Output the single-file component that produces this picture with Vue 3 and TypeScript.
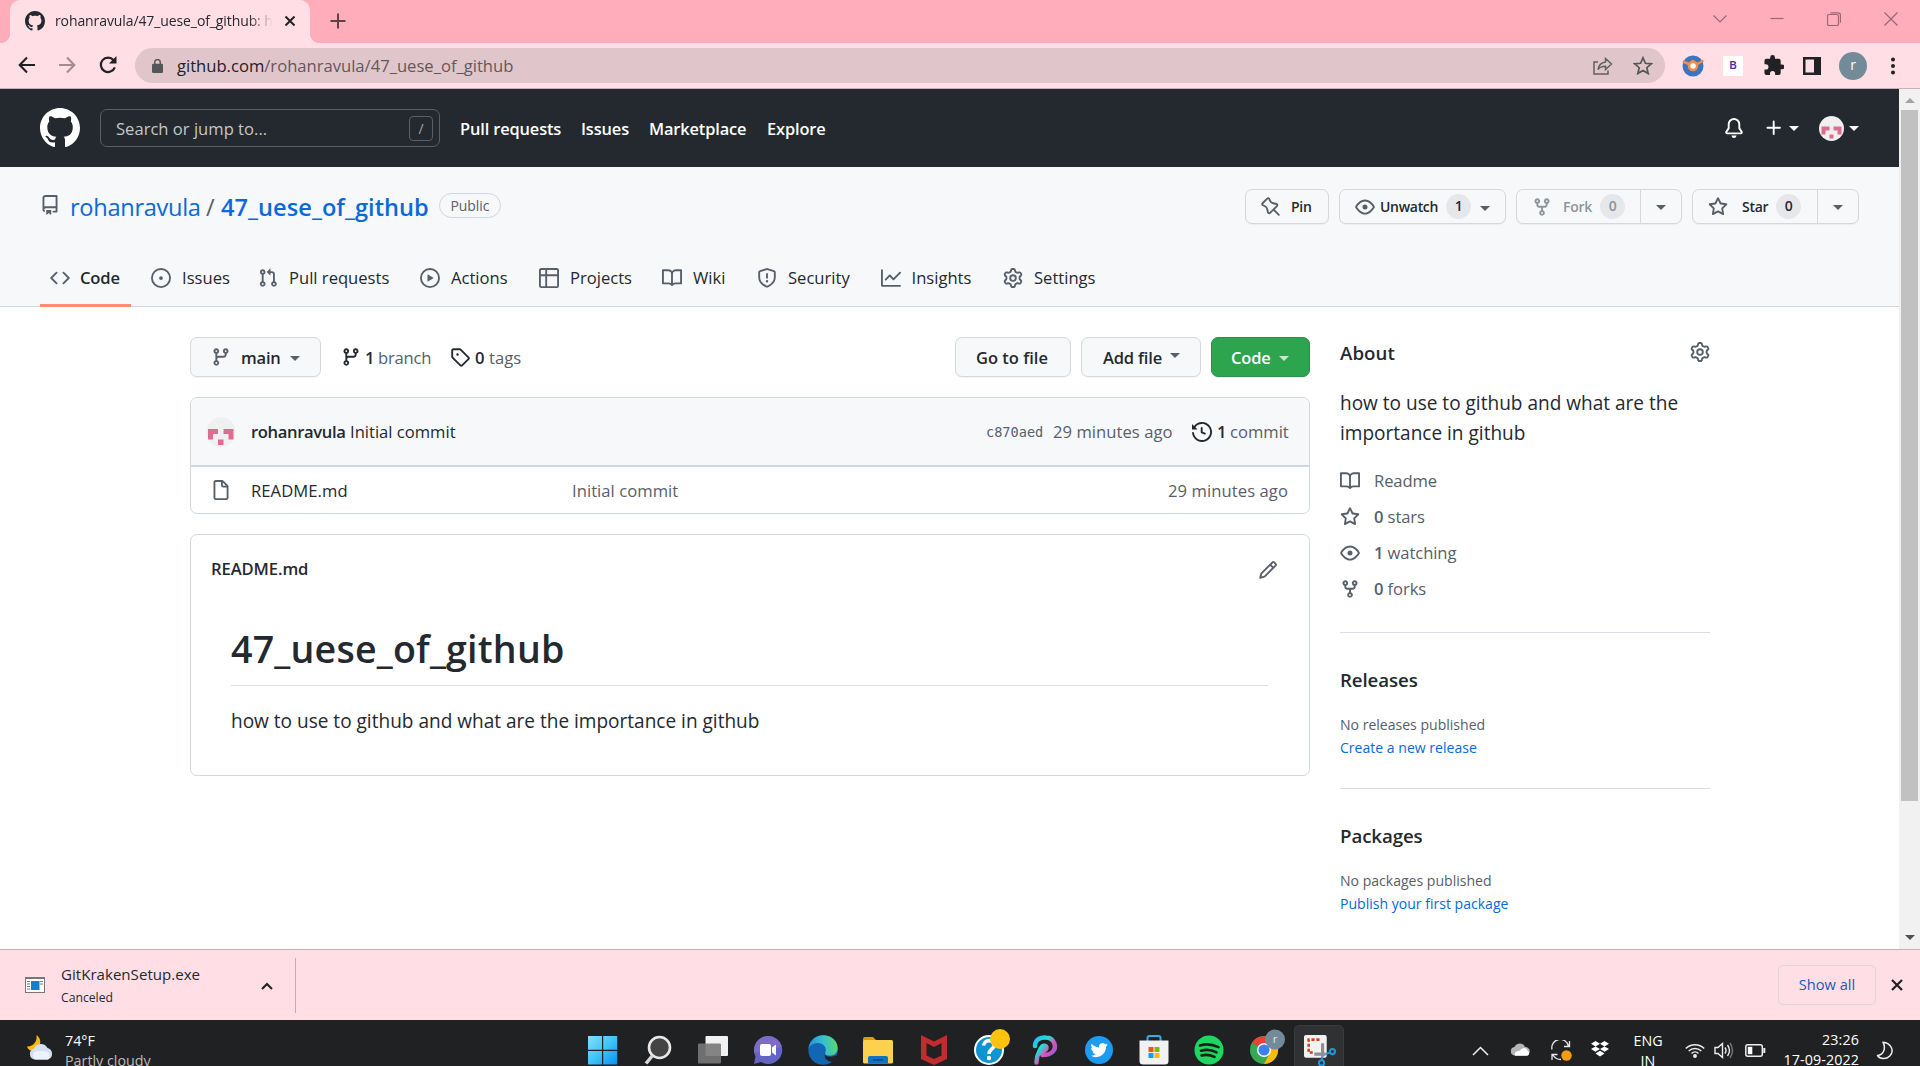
<script setup lang="ts">
import { h } from 'vue'

const paths: Record<string, string> = {
  mark: 'M8 0C3.58 0 0 3.58 0 8c0 3.54 2.29 6.53 5.47 7.59.4.07.55-.17.55-.38 0-.19-.01-.82-.01-1.49-2.01.37-2.53-.49-2.69-.94-.09-.23-.48-.94-.82-1.13-.28-.15-.68-.52-.01-.53.63-.01 1.08.58 1.23.82.72 1.21 1.87.87 2.33.66.07-.52.28-.87.51-1.07-1.78-.2-3.64-.89-3.64-3.95 0-.87.31-1.59.82-2.15-.08-.2-.36-1.02.08-2.12 0 0 .67-.21 2.2.82.64-.18 1.32-.27 2-.27.68 0 1.36.09 2 .27 1.53-1.04 2.2-.82 2.2-.82.44 1.1.16 1.92.08 2.12.51.56.82 1.27.82 2.15 0 3.07-1.87 3.75-3.65 3.95.29.25.54.73.54 1.48 0 1.07-.01 1.93-.01 2.2 0 .21.15.46.55.38A8.013 8.013 0 0016 8c0-4.42-3.58-8-8-8z',
  bell: 'M8 16a2 2 0 001.985-1.75c.017-.137-.097-.25-.235-.25h-3.5c-.138 0-.252.113-.235.25A2 2 0 008 16zM8 1.5A3.5 3.5 0 004.5 5v2.947c0 .346-.102.683-.294.97l-1.703 2.556a.018.018 0 00-.003.01l.001.006c0 .002.002.004.004.006a.017.017 0 00.006.004l.007.001h10.964l.007-.001a.016.016 0 00.006-.004.016.016 0 00.004-.006l.001-.007a.017.017 0 00-.003-.01l-1.703-2.554a1.75 1.75 0 01-.294-.97V5A3.5 3.5 0 008 1.5zM3 5a5 5 0 0110 0v2.947c0 .05.015.098.042.139l1.703 2.555A1.518 1.518 0 0113.482 13H2.518a1.518 1.518 0 01-1.263-2.36l1.703-2.554A.25.25 0 003 7.947V5z',
  plus: 'M7.75 2a.75.75 0 01.75.75V7h4.25a.75.75 0 110 1.5H8.5v4.25a.75.75 0 11-1.5 0V8.5H2.75a.75.75 0 010-1.5H7V2.75A.75.75 0 017.75 2z',
  repo: 'M2 2.5A2.5 2.5 0 014.5 0h8.75a.75.75 0 01.75.75v12.5a.75.75 0 01-.75.75h-2.5a.75.75 0 110-1.5h1.75v-2h-8a1 1 0 00-.714 1.7.75.75 0 01-1.072 1.05A2.495 2.495 0 012 11.5v-9zm10.5-1V9h-8c-.356 0-.694.074-1 .208V2.5a1 1 0 011-1h8zM5 12.25v3.25a.25.25 0 00.4.2l1.45-1.087a.25.25 0 01.3 0L8.6 15.7a.25.25 0 00.4-.2v-3.25a.25.25 0 00-.25-.25h-3.5a.25.25 0 00-.25.25z',
  code: 'M4.72 3.22a.75.75 0 011.06 1.06L2.06 8l3.72 3.72a.75.75 0 11-1.06 1.06L.47 8.53a.75.75 0 010-1.06l4.25-4.25zm6.56 0a.75.75 0 10-1.06 1.06L13.94 8l-3.72 3.72a.75.75 0 101.06 1.06l4.25-4.25a.75.75 0 000-1.06l-4.25-4.25z',
  issue: 'M8 9.5a1.5 1.5 0 100-3 1.5 1.5 0 000 3zM8 0a8 8 0 100 16A8 8 0 008 0zM1.5 8a6.5 6.5 0 1113 0 6.5 6.5 0 01-13 0z',
  pull: 'M7.177 3.073L9.573.677A.25.25 0 0110 .854v4.792a.25.25 0 01-.427.177L7.177 3.427a.25.25 0 010-.354zM3.75 2.5a.75.75 0 100 1.5.75.75 0 000-1.5zm-2.25.75a2.25 2.25 0 113 2.122v5.256a2.251 2.251 0 11-1.5 0V5.372A2.25 2.25 0 011.5 3.25zM11 2.5h-1V4h1a1 1 0 011 1v5.628a2.251 2.251 0 101.5 0V5A2.5 2.5 0 0011 2.5zm1 10.25a.75.75 0 111.5 0 .75.75 0 01-1.5 0zM3.75 12a.75.75 0 100 1.5.75.75 0 000-1.5z',
  play: 'M1.5 8a6.5 6.5 0 1113 0 6.5 6.5 0 01-13 0zM8 0a8 8 0 100 16A8 8 0 008 0zM6.379 5.227A.25.25 0 006 5.442v5.117a.25.25 0 00.379.214l4.264-2.559a.25.25 0 000-.428L6.379 5.227z',
  table: 'M0 1.75C0 .784.784 0 1.75 0h12.5C15.216 0 16 .784 16 1.75v12.5A1.75 1.75 0 0114.25 16H1.75A1.75 1.75 0 010 14.25V1.75zM1.5 6.5v7.75c0 .138.112.25.25.25H5v-8H1.5zM5 5H1.5V1.75a.25.25 0 01.25-.25H5V5zm1.5 1.5v8h7.75a.25.25 0 00.25-.25V6.5h-8zm8-1.5h-8V1.5h7.75a.25.25 0 01.25.25V5z',
  book: 'M0 1.75A.75.75 0 01.75 1h4.253c1.227 0 2.317.59 3 1.501A3.744 3.744 0 0111.006 1h4.245a.75.75 0 01.75.75v10.5a.75.75 0 01-.75.75h-4.507a2.25 2.25 0 00-1.591.659l-.622.621a.75.75 0 01-1.06 0l-.622-.621A2.25 2.25 0 005.258 13H.75a.75.75 0 01-.75-.75V1.75zm8.755 3a2.25 2.25 0 012.25-2.25H14.5v9h-3.757c-.71 0-1.4.201-1.992.572l.004-7.322zm-1.504 7.324l.004-5.073-.002-2.253A2.25 2.25 0 005.003 2.5H1.5v9h3.757a3.75 3.75 0 011.994.574z',
  shield: 'M7.467.133a1.75 1.75 0 011.066 0l5.25 1.68A1.75 1.75 0 0115 3.48V7c0 1.566-.32 3.182-1.303 4.682-.983 1.498-2.585 2.813-5.032 3.855a1.7 1.7 0 01-1.33 0c-2.447-1.042-4.049-2.357-5.032-3.855C1.32 10.182 1 8.566 1 7V3.48a1.75 1.75 0 011.217-1.667l5.25-1.68zm.61 1.429a.25.25 0 00-.153 0l-5.25 1.68a.25.25 0 00-.174.238V7c0 1.358.275 2.666 1.057 3.86.784 1.194 2.121 2.34 4.366 3.297a.2.2 0 00.154 0c2.245-.956 3.582-2.104 4.366-3.298C13.225 9.666 13.5 8.36 13.5 7V3.48a.25.25 0 00-.174-.237l-5.25-1.68zM9 10.5a1 1 0 11-2 0 1 1 0 012 0zm-.25-5.75a.75.75 0 10-1.5 0v3a.75.75 0 001.5 0v-3z',
  graph: 'M1.5 1.75a.75.75 0 00-1.5 0v12.5c0 .414.336.75.75.75h14.5a.75.75 0 000-1.5H1.5V1.75zm14.28 2.53a.75.75 0 00-1.06-1.06L10 7.94 7.53 5.47a.75.75 0 00-1.06 0L3.22 8.72a.75.75 0 001.06 1.06L7 7.06l2.47 2.47a.75.75 0 001.06 0l5.25-5.25z',
  gear: 'M7.429 1.525a6.593 6.593 0 011.142 0c.036.003.108.036.137.146l.289 1.105c.147.56.55.967.997 1.189.174.086.341.183.501.29.417.278.97.423 1.53.27l1.102-.303c.11-.03.175.016.195.046.219.31.41.641.573.989.014.031.022.11-.059.19l-.815.806c-.411.406-.562.957-.53 1.456a4.588 4.588 0 010 .582c-.032.499.119 1.05.53 1.456l.815.806c.08.08.073.159.059.19a6.494 6.494 0 01-.573.99c-.02.029-.086.074-.195.045l-1.103-.303c-.559-.153-1.112-.008-1.529.27-.16.107-.327.204-.5.29-.449.222-.851.628-.998 1.189l-.289 1.105c-.029.11-.101.143-.137.146a6.613 6.613 0 01-1.142 0c-.036-.003-.108-.037-.137-.146l-.289-1.105c-.147-.56-.55-.967-.997-1.189a4.502 4.502 0 01-.501-.29c-.417-.278-.97-.423-1.53-.27l-1.102.303c-.11.03-.175-.016-.195-.046a6.492 6.492 0 01-.573-.989c-.014-.031-.022-.11.059-.19l.815-.806c.411-.406.562-.957.53-1.456a4.587 4.587 0 010-.582c.032-.499-.119-1.05-.53-1.456l-.815-.806c-.08-.08-.073-.159-.059-.19a6.44 6.44 0 01.573-.99c.02-.029.086-.075.195-.045l1.103.303c.559.153 1.112.008 1.529-.27.16-.107.327-.204.5-.29.449-.222.851-.628.998-1.189l.289-1.105c.029-.11.101-.143.137-.146zM8 0c-.236 0-.47.01-.701.03-.743.065-1.29.615-1.458 1.261l-.29 1.106c-.017.066-.078.158-.211.224a5.994 5.994 0 00-.668.386c-.123.082-.233.09-.3.071L3.27 2.776c-.644-.177-1.392.02-1.82.63a7.977 7.977 0 00-.704 1.217c-.315.675-.111 1.422.363 1.891l.815.806c.05.048.098.147.088.294a6.084 6.084 0 000 .772c.01.147-.038.246-.088.294l-.815.806c-.474.469-.678 1.216-.363 1.891.2.428.436.835.704 1.218.428.609 1.176.806 1.82.63l1.103-.303c.066-.019.176-.011.299.071.213.143.436.272.668.386.133.066.194.158.212.224l.289 1.106c.169.646.715 1.196 1.458 1.26a8.094 8.094 0 001.402 0c.743-.064 1.29-.614 1.458-1.26l.29-1.106c.017-.066.078-.158.211-.224a5.98 5.98 0 00.668-.386c.123-.082.233-.09.3-.071l1.102.302c.644.177 1.392-.02 1.82-.63.268-.382.505-.789.704-1.217.315-.675.111-1.422-.364-1.891l-.814-.806c-.05-.048-.098-.147-.088-.294a6.1 6.1 0 000-.772c-.01-.147.039-.246.088-.294l.814-.806c.475-.469.679-1.216.364-1.891a7.992 7.992 0 00-.704-1.218c-.428-.609-1.176-.806-1.82-.63l-1.103.303c-.066.019-.176.011-.299-.071a5.991 5.991 0 00-.668-.386c-.133-.066-.194-.158-.212-.224L10.16 1.29C9.99.645 9.444.095 8.701.031A8.094 8.094 0 008 0zm1.5 8a1.5 1.5 0 11-3 0 1.5 1.5 0 013 0zM11 8a3 3 0 11-6 0 3 3 0 016 0z',
  pin: 'M4.456.734a1.75 1.75 0 012.826.504l.613 1.327a3.081 3.081 0 002.084 1.707l2.454.584c1.332.317 1.8 1.972.832 2.94L11.06 10l3.72 3.72a.75.75 0 11-1.061 1.06L10 11.06l-2.204 2.205c-.968.968-2.623.5-2.94-.832l-.584-2.454a3.081 3.081 0 00-1.707-2.084l-1.327-.613a1.75 1.75 0 01-.504-2.826L4.456.734zM5.92 1.866a.25.25 0 00-.404-.072L1.794 5.516a.25.25 0 00.072.404l1.328.613A4.582 4.582 0 015.73 9.63l.584 2.454a.25.25 0 00.42.12l5.47-5.47a.25.25 0 00-.12-.42L9.63 5.73a4.581 4.581 0 01-3.098-2.537L5.92 1.866z',
  eye: 'M1.679 7.932c.412-.621 1.242-1.75 2.366-2.717C5.175 4.242 6.527 3.5 8 3.5c1.473 0 2.824.742 3.955 1.715 1.124.967 1.954 2.096 2.366 2.717a.119.119 0 010 .136c-.412.621-1.242 1.75-2.366 2.717C10.825 11.758 9.473 12.5 8 12.5c-1.473 0-2.824-.742-3.955-1.715C2.92 9.818 2.09 8.69 1.679 8.068a.119.119 0 010-.136zM8 2c-1.981 0-3.67.992-4.933 2.078C1.797 5.169.88 6.423.43 7.1a1.619 1.619 0 000 1.798c.45.678 1.367 1.932 2.637 3.024C4.329 13.008 6.019 14 8 14c1.981 0 3.67-.992 4.933-2.078 1.27-1.091 2.187-2.345 2.637-3.023a1.619 1.619 0 000-1.798c-.45-.678-1.367-1.932-2.637-3.023C11.671 2.992 9.981 2 8 2zm0 8a2 2 0 100-4 2 2 0 000 4z',
  fork: 'M5 3.25a.75.75 0 11-1.5 0 .75.75 0 011.5 0zm0 2.122a2.25 2.25 0 10-1.5 0v.878A2.25 2.25 0 005.75 8.5h1.5v2.128a2.251 2.251 0 101.5 0V8.5h1.5a2.25 2.25 0 002.25-2.25v-.878a2.25 2.25 0 10-1.5 0v.878a.75.75 0 01-.75.75h-4.5A.75.75 0 015 6.25v-.878zm3.75 7.378a.75.75 0 11-1.5 0 .75.75 0 011.5 0zm3-8.75a.75.75 0 100-1.5.75.75 0 000 1.5z',
  star: 'M8 .25a.75.75 0 01.673.418l1.882 3.815 4.21.612a.75.75 0 01.416 1.279l-3.046 2.97.719 4.192a.75.75 0 01-1.088.791L8 12.347l-3.766 1.98a.75.75 0 01-1.088-.79l.72-4.194L.818 6.374a.75.75 0 01.416-1.28l4.21-.611L7.327.668A.75.75 0 018 .25zm0 2.445L6.615 5.5a.75.75 0 01-.564.41l-3.097.45 2.24 2.184a.75.75 0 01.216.664l-.528 3.084 2.769-1.456a.75.75 0 01.698 0l2.77 1.456-.53-3.084a.75.75 0 01.216-.664l2.24-2.183-3.096-.45a.75.75 0 01-.564-.41L8 2.694v.001z',
  branch: 'M11.75 2.5a.75.75 0 100 1.5.75.75 0 000-1.5zm-2.25.75a2.25 2.25 0 113 2.122V6A2.5 2.5 0 0110 8.5H6a1 1 0 00-1 1v1.128a2.251 2.251 0 11-1.5 0V5.372a2.25 2.25 0 111.5 0v1.836A2.492 2.492 0 016 7h4a1 1 0 001-1v-.628A2.25 2.25 0 019.5 3.25zM4.25 12a.75.75 0 100 1.5.75.75 0 000-1.5zM3.5 3.25a.75.75 0 111.5 0 .75.75 0 01-1.5 0z',
  tag: 'M2.5 7.775V2.75a.25.25 0 01.25-.25h5.025a.25.25 0 01.177.073l6.25 6.25a.25.25 0 010 .354l-5.025 5.025a.25.25 0 01-.354 0l-6.25-6.25a.25.25 0 01-.073-.177zm-1.5 0V2.75C1 1.784 1.784 1 2.75 1h5.025c.464 0 .91.184 1.238.513l6.25 6.25a1.75 1.75 0 010 2.474l-5.026 5.026a1.75 1.75 0 01-2.474 0l-6.25-6.25A1.75 1.75 0 011 7.775zM6 5a1 1 0 100 2 1 1 0 000-2z',
  history: 'M1.643 3.143L.427 1.927A.25.25 0 000 2.104V5.75c0 .138.112.25.25.25h3.646a.25.25 0 00.177-.427L2.715 4.215a6.5 6.5 0 11-1.18 4.458.75.75 0 10-1.493.154 8.001 8.001 0 101.6-5.684zM7.75 4a.75.75 0 01.75.75v2.992l2.028.812a.75.75 0 01-.557 1.392l-2.5-1A.75.75 0 017 8.25v-3.5A.75.75 0 017.75 4z',
  file: 'M3.75 1.5a.25.25 0 00-.25.25v12.5c0 .138.112.25.25.25h8.5a.25.25 0 00.25-.25V6h-2.75A1.75 1.75 0 018 4.25V1.5H3.75zm5.75.56v2.19c0 .138.112.25.25.25h2.19L9.5 2.06zM2 1.75C2 .784 2.784 0 3.75 0h5.086c.464 0 .909.184 1.237.513l3.414 3.414c.329.328.513.773.513 1.237v9.086A1.75 1.75 0 0112.25 16h-8.5A1.75 1.75 0 012 14.25V1.75z',
  pencil: 'M11.013 1.427a1.75 1.75 0 012.474 0l1.086 1.086a1.75 1.75 0 010 2.474l-8.61 8.61c-.21.21-.47.364-.756.445l-3.251.93a.75.75 0 01-.927-.928l.929-3.25a1.75 1.75 0 01.445-.758l8.61-8.61zm1.414 1.06a.25.25 0 00-.354 0L10.811 3.75l1.439 1.44 1.263-1.263a.25.25 0 000-.354l-1.086-1.086zM11.189 6.25L9.75 4.81l-6.286 6.287a.25.25 0 00-.064.108l-.558 1.953 1.953-.558a.249.249 0 00.108-.064l6.286-6.286z',
}

const Octicon = (props: { name: string; size?: number }) =>
  h('svg', {
    class: 'octicon',
    width: props.size ?? 20,
    height: props.size ?? 20,
    viewBox: '0 0 16 16',
    fill: 'currentColor',
    'fill-rule': 'evenodd',
  }, [h('path', { d: paths[props.name] })])
Octicon.props = ['name', 'size']

const tabs = [
  { icon: 'code', label: 'Code', width: 91 },
  { icon: 'issue', label: 'Issues', width: 97 },
  { icon: 'pull', label: 'Pull requests', width: 152 },
  { icon: 'play', label: 'Actions', width: 109 },
  { icon: 'table', label: 'Projects', width: 113 },
  { icon: 'book', label: 'Wiki', width: 85 },
  { icon: 'shield', label: 'Security', width: 113.500 },
  { icon: 'graph', label: 'Insights', width: 112.500 },
  { icon: 'gear', label: 'Settings', width: 113 },
]
const stats = [
  { icon: 'book', count: '', label: 'Readme' },
  { icon: 'star', count: '0', label: 'stars' },
  { icon: 'eye', count: '1', label: 'watching' },
  { icon: 'fork', count: '0', label: 'forks' },
]
</script>

<template>
  <div class="screen">
    <!-- Tab strip -->
    <div class="tabstrip">
      <div class="tab">
        <Octicon name="mark" :size="20" />
        <span class="tab-title">rohanravula/47_uese_of_github: h</span>
        <svg class="tab-x" width="12" height="12" viewBox="0 0 12 12"><path d="M1.5 1.5l9 9M10.5 1.5l-9 9" stroke="#202124" stroke-width="2" /></svg>
      </div>
      <svg class="newtab" width="16" height="16" viewBox="0 0 16 16"><path d="M8 .5v15M.5 8h15" stroke="#5c4348" stroke-width="2" /></svg>
      <div class="winctl">
        <svg width="14" height="14" viewBox="0 0 14 14"><path d="M.5 3.5L7 10l6.500-6.500" /></svg>
        <svg width="14" height="14" viewBox="0 0 14 14"><path d="M.5 6.500h13" /></svg>
        <svg width="14" height="14" viewBox="0 0 14 14"><rect x=".5" y="2.500" width="11" height="11" rx="1.500" /><path d="M3.500 .8h7.500a2.500 2.500 0 012.500 2.500v7.500" /></svg>
        <svg width="14" height="14" viewBox="0 0 14 14"><path d="M.5 .5l13 13M13.500 .5l-13 13" /></svg>
      </div>
    </div>

    <!-- Toolbar -->
    <div class="toolbar">
      <svg class="nav-i" width="18" height="18" viewBox="0 0 18 18"><path d="M17 9H2M9 1.500L1.700 9 9 16.500" fill="none" stroke="#202124" stroke-width="2.100" /></svg>
      <svg class="nav-i" width="18" height="18" viewBox="0 0 18 18"><path d="M1 9h15M9 1.500L16.300 9 9 16.500" fill="none" stroke="#a18d91" stroke-width="2.100" /></svg>
      <svg class="nav-i" width="20" height="20" viewBox="0 0 20 20"><path d="M16.800 12.300A7.200 7.200 0 1115.600 5.200" fill="none" stroke="#202124" stroke-width="2.200" /><path d="M18.500 1v7.500H11z" fill="#202124" /></svg>
      <div class="omnibox">
        <svg width="11" height="14" viewBox="0 0 12 15"><rect y="5" width="12" height="10" rx="1.300" fill="#54565a" /><path d="M3 6V3.500a3 3 0 016 0V6" fill="none" stroke="#54565a" stroke-width="1.600" /></svg>
        <span class="url"><b>github.com</b>/rohanravula/47_uese_of_github</span>
        <svg class="share" width="20" height="18" viewBox="0 0 20 18" fill="none" stroke="#5f6062" stroke-width="1.500"><path d="M5 5H1v12h14v-3.500" /><path d="M12.500 1.500L18.500 7l-6 5.500V9.300C9 9.300 6.500 10.400 5 12.500c.5-4 3-7 7.500-7.600z" /></svg>
        <svg width="20" height="19" viewBox="0 0 20 19"><path d="M10 1.800l2.400 5.500 5.900.5-4.500 3.900 1.400 5.800-5.200-3.100-5.200 3.100 1.400-5.800L1.700 7.800l5.900-.5z" fill="none" stroke="#55575a" stroke-width="1.700" /></svg>
      </div>
      <div class="exts">
        <svg width="22" height="22" viewBox="0 0 22 22"><circle cx="11" cy="11" r="10.500" fill="#3a76bf" /><path d="M.8 6.500l6 2.500 4-3 4.500 3 6-3.500" fill="none" stroke="#f58b4c" stroke-width="2.500" /><circle cx="11" cy="11" r="4" fill="#fff" stroke="#f58b4c" stroke-width="2.500" /></svg>
        <span class="ext-b">B</span>
        <svg class="puzzle" width="20" height="20" viewBox="1.500 1 21 21"><path d="M20.500 11H19V7a2 2 0 00-2-2h-4V3.500a2.500 2.500 0 00-5 0V5H4a2 2 0 00-2 2v3.800h1.500a2.700 2.700 0 010 5.400H2V20a2 2 0 002 2h3.800v-1.500a2.700 2.700 0 015.400 0V22H17a2 2 0 002-2v-4h1.500a2.500 2.500 0 000-5z" fill="#202124" /></svg>
        <svg width="18" height="18" viewBox="0 0 18 18"><rect x="1.250" y="1.250" width="15.500" height="15.500" fill="none" stroke="#202124" stroke-width="2.500" /><rect x="11" y="1" width="6" height="16" fill="#202124" /></svg>
        <span class="profile">r</span>
        <svg width="6" height="18" viewBox="0 0 6 18" fill="#202124"><circle cx="3" cy="2.500" r="2" /><circle cx="3" cy="9" r="2" /><circle cx="3" cy="15.500" r="2" /></svg>
      </div>
    </div>

    <div class="viewport">
      <div class="page">
        <header class="gh-head">
          <Octicon name="mark" :size="40" />
          <div class="search"><span>Search or jump to...</span><i>/</i></div>
          <nav class="gh-nav">
            <a class="n1">Pull requests</a><a class="n2">Issues</a><a class="n3">Marketplace</a><a>Explore</a>
          </nav>
          <div class="gh-right">
            <Octicon name="bell" />
            <Octicon name="plus" class="plus" /><em class="caret"></em>
            <svg class="ava" width="25" height="25" viewBox="0 0 25 25"><circle cx="12.500" cy="12.500" r="12.500" fill="#f0f0f0" /><path d="M2.500 10.500h8v4h-4v4h-4zM14.500 10.500h8v8h-4v-4h-4zM10.500 18.500h4v4h-4z" fill="#dd6d8f" /></svg>
            <em class="caret"></em>
          </div>
        </header>

        <section class="repo-head">
          <div class="repo-row">
            <Octicon name="repo" class="repo-i" />
            <h1 class="repo-name"><a class="owner">rohanravula</a><span class="slash">/</span><a class="rname">47_uese_of_github</a></h1>
            <span class="pill">Public</span>
            <div class="actions">
              <div class="btn sm pin"><Octicon name="pin" /><span>Pin</span></div>
              <div class="btn sm watch"><Octicon name="eye" /><span>Unwatch</span><b class="cnt">1</b><em class="caret"></em></div>
              <div class="btn sm split disabled"><div class="main"><Octicon name="fork" /><span>Fork</span><b class="cnt">0</b></div><div class="drop"><em class="caret"></em></div></div>
              <div class="btn sm split"><div class="main star"><Octicon name="star" /><span class="st">Star</span><b class="cnt">0</b></div><div class="drop"><em class="caret"></em></div></div>
            </div>
          </div>
          <nav class="tabs">
            <a v-for="(t, i) in tabs" :key="t.label" :class="{ active: i === 0 }" :style="{ width: t.width + 'px' }">
              <Octicon :name="t.icon" /><span>{{ t.label }}</span>
            </a>
          </nav>
        </section>

        <main class="content">
          <div class="left">
            <div class="filebar">
              <div class="btn md branch-btn"><Octicon name="branch" /><span>main</span><em class="caret"></em></div>
              <div class="ref r1"><Octicon name="branch" /><b>1</b><span>branch</span></div>
              <div class="ref r2"><Octicon name="tag" /><b>0</b><span>tags</span></div>
              <div class="btn md goto"><span>Go to file</span></div>
              <div class="btn md add"><span>Add file</span><em class="caret up"></em></div>
              <div class="btn md codebtn"><span>Code</span><em class="caret"></em></div>
            </div>
            <div class="box">
              <div class="commit">
                <svg class="ava30" width="30" height="30" viewBox="0 0 30 30"><circle cx="15" cy="15" r="14.700" fill="#eff0f0" /><path d="M2 12h10v5H7v5.500H2zM17.500 12h10v10.500h-5V17h-5zM12 22.500h5.500V28H12z" fill="#dd6d8f" /></svg>
                <b class="author">rohanravula</b><span class="msg">Initial commit</span>
                <code>c870aed</code><span class="muted when">29 minutes ago</span>
                <Octicon name="history" /><b class="one">1</b><span class="muted commits">commit</span>
              </div>
              <div class="file">
                <Octicon name="file" class="file-i" /><span class="fname">README.md</span>
                <span class="muted fmsg">Initial commit</span><span class="muted fwhen">29 minutes ago</span>
              </div>
            </div>
            <div class="box readme">
              <div class="readme-head"><b>README.md</b><Octicon name="pencil" /></div>
              <article><h1><span>47_uese_of_github</span></h1><p>how to use to github and what are the importance in github</p></article>
            </div>
          </div>
          <aside class="side">
            <section class="about">
              <div class="side-head"><h2>About</h2><Octicon name="gear" class="side-gear" /></div>
              <p class="desc">how to use to github and what are the<br />importance in github</p>
              <div v-for="s in stats" :key="s.label" class="stat">
                <Octicon :name="s.icon" /><span><b v-if="s.count">{{ s.count }}</b>{{ s.count ? ' ' : '' }}{{ s.label }}</span>
              </div>
            </section>
            <section class="extra"><h2>Releases</h2><p>No releases published</p><a>Create a new release</a></section>
            <section class="extra"><h2>Packages</h2><p>No packages published</p><a>Publish your first package</a></section>
          </aside>
        </main>
      </div>
      <div class="scroll"><i class="su"></i><div class="thumb"></div><i class="sd"></i></div>
    </div>

    <!-- Download shelf -->
    <div class="shelf">
      <svg class="exe" width="20" height="16" viewBox="0 0 20 16"><rect x=".5" y=".5" width="19" height="15" fill="#fff" stroke="#777" /><path d="M0 1h20" stroke="#777" stroke-width="2" /><path d="M2 4.500h3M2 7h3M2 9.500h3M2 12h3M15 4.500h3M15 7h3" stroke="#777" /><rect x="6" y="4" width="8.500" height="9" fill="#0f7fd4" /></svg>
      <div class="dl"><span class="dl-name">GitKrakenSetup.exe</span><span class="dl-st">Canceled</span></div>
      <svg class="chev" width="12" height="8" viewBox="0 0 12 8"><path d="M1 7l5-5 5 5" fill="none" stroke="#202124" stroke-width="2" /></svg>
      <div class="dl-div"></div>
      <div class="showall">Show all</div>
      <svg class="shelf-x" width="12" height="12" viewBox="0 0 12 12"><path d="M1 1l10 10M11 1L1 11" stroke="#202124" stroke-width="2.200" /></svg>
    </div>

    <!-- Taskbar -->
    <div class="taskbar">
      <svg class="weather" width="27" height="25" viewBox="0 0 27 25"><path d="M9.500 0c5 3.500 5.500 11-1 14.500L3 15.500Q0 13 0 11.500C6 12 10.500 6.500 9.500 0z" fill="#fdb813" /><path d="M8 24.500a5.500 5.500 0 01-1-10.800A7.500 7.500 0 0120.500 13a6 6 0 01.500 11.500z" fill="#d3def2" /><path d="M8 24.500a5 5 0 010-8q6-1 12 0a5 5 0 011 8z" fill="#edf3fd" /></svg>
      <div class="wx"><span>74°F</span><span class="wx2">Partly cloudy</span></div>
      <div class="apps">
        <svg viewBox="0 0 30 30"><defs><linearGradient id="win" x1="0" y1="0" x2="1" y2="1"><stop offset="0" stop-color="#84e0fb" /><stop offset=".5" stop-color="#3fc5f9" /><stop offset="1" stop-color="#0a90ee" /></linearGradient></defs><path d="M0 1h14v13.700H0zM15.200 1h14v13.700h-14zM0 15.900h14v13.700H0zM15.200 15.900h14v13.700h-14z" fill="url(#win)" /></svg>
        <svg viewBox="0 0 30 30"><circle cx="16.500" cy="12.500" r="10.500" fill="#444" stroke="#e8e8e8" stroke-width="2.600" /><path d="M9.500 20.500L3 28.500" stroke="#d8d8d8" stroke-width="3.500" /></svg>
        <svg viewBox="0 0 30 30"><rect x="7.500" y="1" width="22.500" height="20" rx="1" fill="#f1f1f1" /><rect y="8.500" width="23" height="20" rx="1" fill="#787878" opacity=".9" /></svg>
        <svg viewBox="0 0 30 30"><path d="M15 1a14 14 0 11-7 26l-7 2 1.500-7.500A14 14 0 0115 1z" fill="#6264c7" /><path d="M15 1A14 14 0 001.500 18L29 12A14 14 0 0015 1z" fill="#9473c7" opacity=".55" /><rect x="7" y="9" width="11" height="12" rx="2" fill="#fff" /><path d="M19 12.500l4-3v11l-4-3z" fill="#fff" /></svg>
        <svg viewBox="0 0 30 30"><defs><linearGradient id="edge" x1="0" y1=".3" x2="1" y2=".2"><stop offset="0" stop-color="#2494d8" /><stop offset=".5" stop-color="#35c1ce" /><stop offset="1" stop-color="#5bd869" /></linearGradient></defs><circle cx="15" cy="15" r="14.700" fill="#1266b4" /><path d="M.5 14C1.500 5 8 .3 15 .3 24 .3 29.700 6.500 29.700 13c0 5-3.700 7.500-7.700 7.500s-6-1.500-4.500-3.500C19 12 15 8 10 8 5 8 1.500 11 .5 14z" fill="url(#edge)" /><path d="M17.300 17.500c-1.500 2 .7 4.500 5.200 4.200 2.500-.2 4.500-1 5.800-1.500l1.700 3-3 3.500c-7 1-12-3-9.700-9.200z" fill="#202428" /></svg>
        <svg viewBox="0 0 30 30"><path d="M0 4a2 2 0 012-2h8l3 3v6H0z" fill="#dd9a10" /><rect y="5" width="30" height="23.500" rx="1.500" fill="#fcd14e" /><path d="M5 28.500V23a2 2 0 012-2h16a2 2 0 012 2v5.500z" fill="#0f72c5" /><path d="M10 25h10" stroke="#0a4a89" stroke-width="1.500" /></svg>
        <svg viewBox="0 0 30 30"><path d="M2 0l13 6.500L28 0v24l-13 6-13-6zM7.500 8v12.500L15 24l7.500-3.500V8L15 12z" fill="#c22c2f" fill-rule="evenodd" /></svg>
        <svg viewBox="0 0 30 30"><circle cx="15" cy="15" r="14" fill="#0f94d2" stroke="#fff" stroke-width="2" /><path d="M9.500 10.500c1-7 12-6 10.500.5-1 3.500-5 3.500-5 8" fill="none" stroke="#fff" stroke-width="3.600" /><circle cx="15" cy="23" r="2.200" fill="#fff" /><circle cx="26" cy="4" r="10" fill="#ffc20e" /></svg>
        <svg viewBox="0 0 30 30"><defs><linearGradient id="pp" x1="0" y1="0" x2="1" y2="1"><stop offset="0" stop-color="#29b7f5" /><stop offset=".35" stop-color="#1fe0d5" /><stop offset=".6" stop-color="#e948b8" /><stop offset="1" stop-color="#377df0" /></linearGradient></defs><path d="M7.500 27.500C7.500 20 10 17 12 13c2-3.500 6-2.500 5.500 0-.5 2.500-3.500 3-5 4M6 11C6 3.500 13 2 17 2.500c9 .5 11 10 6.500 14.500-3 3-7 3-10 3" fill="none" stroke="url(#pp)" stroke-width="4.500" stroke-linecap="round" /></svg>
        <svg viewBox="0 0 30 30"><circle cx="15" cy="15" r="14" fill="#1d9bf0" /><path transform="translate(6.500 6.500) scale(.72)" fill="#fff" d="M23.950 4.570a10 10 0 01-2.820.770 4.960 4.960 0 002.160-2.720c-.950.550-2 .950-3.130 1.180a4.920 4.920 0 00-8.380 4.480C7.690 8.100 4.070 6.130 1.640 3.160a4.820 4.820 0 00-.670 2.480c0 1.710.87 3.210 2.190 4.100a4.900 4.900 0 01-2.230-.620v.060a4.920 4.920 0 003.950 4.830 5 5 0 01-2.210.080 4.940 4.940 0 004.600 3.420A9.870 9.870 0 010 19.540a14 14 0 007.550 2.210c9.050 0 14-7.500 14-13.980l-.020-.640a9.900 9.900 0 002.420-2.560z" /></svg>
        <svg viewBox="0 0 30 30"><path d="M8.500 6V3a2 2 0 012-2h9a2 2 0 012 2v3" fill="none" stroke="#39a9e8" stroke-width="2" /><path d="M.5 5.500h29V26a3.500 3.500 0 01-3.500 3.500H4A3.500 3.500 0 01.5 26z" fill="#f2f2f3" /><path d="M9.500 12h5v5h-5z" fill="#f25022" /><path d="M15.500 12h5v5h-5z" fill="#7fba00" /><path d="M9.500 18h5v5h-5z" fill="#00a4ef" /><path d="M15.500 18h5v5h-5z" fill="#ffb900" /></svg>
        <svg viewBox="0 0 30 30"><circle cx="15" cy="15" r="14.500" fill="#1ed760" /><path d="M6 10.500q9-2.800 18.500 1.700M7 15.700q8-2.300 15.500 1.600M7.500 20.500q7-1.800 13 1.400" fill="none" stroke="#16201a" stroke-width="2.600" stroke-linecap="round" /></svg>
        <svg viewBox="0 0 30 30"><circle cx="15" cy="15" r="14" fill="#34a853" /><path d="M15 15L3 8A14 14 0 0127 8z" fill="#ea4335" /><path d="M27.500 8.500A14 14 0 0115 29l6-11-3-9.500z" fill="#fbbc05" /><circle cx="15" cy="15" r="7" fill="#fff" /><circle cx="15" cy="15" r="5.600" fill="#3f7fee" /><circle cx="26" cy="4.500" r="10" fill="#738b99" /><text x="26" y="8" font-size="11" fill="#dfe6ea" text-anchor="middle">r</text></svg>
        <div class="snip"><svg viewBox="0 0 30 30"><rect y="0" width="22" height="22" rx="2" fill="#f3f3f3" /><path d="M15 4.500H4.500V17H10" fill="none" stroke="#d83b20" stroke-width="2.500" stroke-dasharray="3 1.800" /><path d="M18 8v13M10 18.500h11" fill="none" stroke="#8a9096" stroke-width="3" /><path d="M21 18.500l4-1.500M17.500 21v4" stroke="#2296d6" stroke-width="2" /><circle cx="27.500" cy="16" r="2.500" fill="none" stroke="#2296d6" stroke-width="2" /><circle cx="17" cy="27" r="2.500" fill="none" stroke="#2296d6" stroke-width="2" /></svg></div>
      </div>
      <div class="tray">
        <svg class="t1" width="17" height="10" viewBox="0 0 17 10"><path d="M1 9l7.500-7.500L16 9" fill="none" stroke="#eee" stroke-width="1.500" /></svg>
        <svg class="t2" width="21" height="13" viewBox="0 0 21 13"><path d="M4.500 12.500a4.300 4.300 0 010-8.500C6 0 13-1 15 4a4 4 0 011 8.500z" fill="#b5b5b5" /><path d="M5 12.700C3.500 9 8 8 10 7.500c3-4 7-2.500 7.500.2a2.700 2.700 0 010 5z" fill="#fff" /></svg>
        <svg class="t3" width="21" height="21" viewBox="0 0 21 21"><path d="M1 9.500A8.300 8.300 0 0117.500 6M18.500 1v5.500H13M1 20v-5.500h5.500M1.500 14.500c2 3.500 5 5 8.500 5" fill="none" stroke="#e8e8e8" stroke-width="1.300" /><circle cx="15.500" cy="15.500" r="5.200" fill="#f99b0b" /></svg>
        <svg class="t4" width="18" height="16" viewBox="0 0 18 16"><path d="M4.500 0L9 2.700 4.500 5.400 0 2.700zM13.500 0L18 2.700l-4.500 2.700L9 2.700zM4.500 5.400L9 8.100l-4.500 2.700L0 8.100zM13.500 5.400L18 8.100l-4.500 2.700L9 8.100zM9 9.800l4.500 2.700L9 15.500l-4.500-3z" fill="#fff" /></svg>
        <div class="lang"><span>ENG</span><span>IN</span></div>
        <svg class="t5" width="20" height="16" viewBox="0 0 20 16" fill="none" stroke="#eee" stroke-width="1.500"><path d="M.8 6.500a13 13 0 0118.400 0M3.700 9a9 9 0 0112.600 0M6.500 11.500a5 5 0 017 0" /><circle cx="10" cy="14" r="1.200" fill="#eee" /></svg>
        <svg class="t6" width="20" height="17" viewBox="0 0 20 17" fill="none" stroke="#eee" stroke-width="1.400"><path d="M1 5.500h3L8.500 1.500v14L4 11.500H1zM11 5.500q2 3 0 6M13.500 3q4 5.500 0 11" /><path d="M16 1q5 7.500 0 15" stroke="#777" /></svg>
        <svg class="t7" width="21" height="13" viewBox="0 0 21 13"><rect x=".8" y=".8" width="16.500" height="11.400" rx="2" fill="none" stroke="#eee" stroke-width="1.500" /><rect x="2.800" y="2.800" width="4.500" height="7.400" fill="#fff" /><path d="M19.300 4v5" stroke="#eee" stroke-width="2" /></svg>
        <div class="clock"><span>23:26</span><span>17-09-2022</span></div>
        <svg class="t8" width="18" height="19" viewBox="0 0 18 19"><path d="M7 1.200c8 .5 12 9 6.500 14-3.500 3.500-9.500 3-12-.7C8 14 10 7 7 1.200z" fill="none" stroke="#eee" stroke-width="1.500" stroke-linejoin="round" /></svg>
      </div>
    </div>
  </div>
</template>

<style>
body { margin: 0; overflow: hidden; }
</style>

<style scoped>
* { box-sizing: border-box; }
.screen { width: 1920px; height: 1066px; overflow: hidden; display: flex; flex-direction: column; font-family: "Open Sans", "Noto Sans", sans-serif; font-size: 16.6px; color: #24292f; background: #fff; white-space: nowrap; }
b { font-weight: 600; }
svg { display: block; flex: none; }
span { display: block; }
h1, h2, p { margin: 0; font-weight: 400; }

.tabstrip { height: 43px; flex: none; background: #ffadbb; display: flex; align-items: flex-start; padding-left: 10px; }
.tab { position: relative; width: 300px; height: 43px; background: #ffdfe5; border-radius: 10px 10px 0 0; display: flex; align-items: center; padding: 0 14px 2px 15px; color: #24292f; }
.tab::before, .tab::after { content: ""; position: absolute; bottom: 0; width: 10px; height: 10px; }
.tab::before { left: -10px; background: radial-gradient(circle at 0 0, transparent 10px, #ffdfe5 10.5px); }
.tab::after { right: -10px; background: radial-gradient(circle at 100% 0, transparent 10px, #ffdfe5 10.5px); }
.tab-title { width: 219px; margin: 0 11px 0 10px; font-size: 14px; letter-spacing: -.1px; -webkit-mask-image: linear-gradient(90deg, #000 89%, transparent 100%); mask-image: linear-gradient(90deg, #000 89%, transparent 100%); }
.newtab { margin: 13px 0 0 20px; }
.winctl { margin: 12px 22px 0 auto; display: flex; gap: 43px; }
.winctl svg { fill: none; stroke: #9a6872; stroke-width: 1.2; }

.toolbar { height: 46px; flex: none; background: #ffdfe5; border-bottom: 1px solid #c9b0b5; display: flex; align-items: center; padding-left: 18px; }
.nav-i { margin-right: 22px; margin-bottom: 1px; }
.omnibox { width: 1530px; height: 35px; border-radius: 18px; background: #e0c6cb; display: flex; align-items: center; padding: 0 12px 0 17px; margin-left: -5px; }
.url { margin-left: 14px; font-size: 16.6px; color: #60595c; }
.url b { font-weight: 400; color: #202124; }
.share { margin-left: auto; margin-right: 20px; }
.exts { display: flex; align-items: center; margin-left: 17px; }
.ext-b { width: 20px; height: 20px; background: #fff; color: #3c35a8; font: 700 10px/20px "Liberation Sans", sans-serif; text-align: center; margin: 0 21px 0 19px; }
.puzzle { margin-right: 19px; margin-top: -2px; }
.profile { width: 28px; height: 28px; border-radius: 50%; background: #738b99; color: #fff; text-align: center; line-height: 26px; font-size: 14px; margin: 0 23px 0 18px; }

.viewport { height: 860px; flex: none; display: flex; }
.page { width: 1899px; overflow: hidden; }
.gh-head { height: 78px; background: #24292f; color: #fff; display: flex; align-items: center; padding-left: 40px; }
.search { width: 340px; height: 38px; margin-left: 20px; border: 1px solid #57606a; border-radius: 7px; display: flex; align-items: center; justify-content: space-between; padding: 0 6px 0 15px; color: #c3c6c9; font-size: 16.6px; }
.search i { width: 24px; height: 25px; border: 1px solid #57606a; border-radius: 4px; font-style: normal; font-size: 14px; line-height: 23px; text-align: center; color: #a0a5aa; }
.gh-nav { display: flex; margin-left: 20px; font-weight: 600; font-size: 16.4px; letter-spacing: -.13px; }
.n1 { width: 121px; } .n2 { width: 68px; } .n3 { width: 118px; }
.gh-right { margin-left: auto; margin-right: 40px; display: flex; align-items: center; }
.plus { margin-left: 20px; margin-right: 5px; }
.ava { margin: 0 5px 0 20px; }
.caret { display: block; flex: none; width: 0; height: 0; border: 5px solid transparent; border-top-color: currentColor; border-bottom: 0; }

.repo-head { height: 140px; background: #f6f8fa; border-bottom: 1px solid #d0d7de; padding-left: 40px; display: flex; flex-direction: column; }
.repo-row { height: 77px; display: flex; padding-top: 22px; }
.repo-i { color: #57606a; margin-top: 6px; }
.repo-name { display: flex; height: 35px; align-items: center; margin-left: 10px; font-size: 23.6px; color: #0969da; letter-spacing: -.3px; }
.owner { width: 136px; } .slash { width: 15px; color: #57606a; }
.rname { font-weight: 600; width: 218px; letter-spacing: .03px; }
.pill { width: 62px; height: 25px; margin-top: 4px; border: 1px solid #d0d7de; border-radius: 13px; color: #57606a; font-size: 13.9px; font-weight: 500; line-height: 23px; text-align: center; }
.actions { margin-left: auto; margin-right: 40px; display: flex; gap: 10px; }
.btn { display: flex; align-items: center; background: #f6f8fa; border: 1px solid #d5d8da; border-radius: 7px; box-shadow: 0 1px 0 rgba(27,31,36,.04); font-weight: 500; }
.btn.sm { height: 35px; font-size: 14px; font-weight: 600; letter-spacing: -.3px; }
.btn .octicon, .btn .caret { color: #57606a; }
.pin { width: 84px; padding-left: 15px; } .pin span { margin-left: 10px; }
.watch { width: 167px; padding-left: 15px; } .watch span { width: 66px; margin-left: 5px; } .watch .caret { margin: 3px 0 0 9px; }
.cnt { width: 25px; height: 25px; border-radius: 13px; background: #e5e7ea; line-height: 24px; text-align: center; font-weight: 600; }
.split { width: 167px; } .split.disabled { width: 166px; }
.split .main { width: 124px; height: 33px; border-right: 1px solid #d5d8da; display: flex; align-items: center; padding-left: 15px; }
.split .star { width: 125px; }
.split .main span { width: 37px; margin-left: 11px; } .split .main .st { width: 34px; margin-left: 14px; }
.split .drop { flex: 1; display: flex; justify-content: center; align-items: center; padding-top: 2px; }
.disabled .main, .disabled .main .octicon { color: #8c959f; }
.tabs { display: flex; gap: 10px; height: 62px; }
.tabs a { display: flex; align-items: center; padding: 5px 0 0 10px; flex: none; }
.tabs .octicon { color: #57606a; }
.tabs span { margin-left: 11px; margin-top: -1px; }
.tabs .active { font-weight: 600; box-shadow: inset 0 -3px #fd8c73; letter-spacing: -.2px; height: 63px; padding-top: 4px; position: relative; }
.tabs .active span { margin-left: 10px; }

.content { display: flex; padding-left: 190px; }
.left { width: 1120px; padding-top: 30px; }
.filebar { height: 40px; display: flex; align-items: center; }
.btn.md { height: 40px; font-weight: 600; letter-spacing: -.18px; font-size: 16.5px; }
.branch-btn { width: 131px; padding-left: 20px; margin-right: 20px; } .branch-btn span { width: 49px; margin-left: 10px; }
.branch-btn .caret { margin-top: 3px; }
.ref { display: flex; align-items: center; } .ref span { color: #57606a; }
.r1 b { width: 13px; margin-left: 4px; } .r1 span { width: 72px; letter-spacing: -.2px; }
.r2 b { width: 14px; margin-left: 5px; }
.goto { width: 116px; padding-left: 20px; margin-left: auto; letter-spacing: 0 !important; }
.add { width: 120px; padding-left: 21px; margin: 0 10px; } .add span { width: 67px; } .add .caret { margin-top: -3px; }
.codebtn { width: 99px; padding-left: 19px; background: #2da44e; border-color: #2a9147; color: #fff; } .codebtn span { width: 48px; } .codebtn .caret { color: #c8e8d0; margin-top: 2px; }
.box { border: 1px solid #d0d7de; border-radius: 7px; margin-top: 20px; overflow: hidden; }
.commit { height: 69px; background: #f6f8fa; border-bottom: 2px solid #d0d7de; display: flex; align-items: center; padding-left: 15px; }
.author { width: 99px; margin-left: 15px; letter-spacing: -.35px; }
.msg { width: 636px; }
code { width: 66px; font-family: "DejaVu Sans Mono", monospace; font-size: 13.6px; color: #57606a; }
.muted { color: #57606a; }
.when { width: 140px; letter-spacing: .05px; padding-left: 1px; } .one { width: 13px; margin-left: 5px; }
.file { height: 46px; display: flex; align-items: center; padding-left: 20px; }
.file-i { color: #57606a; margin-right: 20px; }
.fname { width: 321px; letter-spacing: .08px; } .fmsg { width: 200px; letter-spacing: .05px; } .fwhen { margin-left: auto; margin-right: 21px; letter-spacing: .08px; }
.readme { height: 242px; }
.readme-head { height: 70px; display: flex; align-items: center; justify-content: space-between; padding: 0 31px 0 20px; color: #24292f; }
.readme-head .octicon { color: #57606a; }
.readme-head b { letter-spacing: -.1px; margin-top: -3px; }
article { padding: 19px 41px 0 40px; }
article h1 { height: 62px; border-bottom: 1px solid #d8dee4; font-size: 37.6px; font-weight: 600; line-height: 50px; letter-spacing: .2px; }
article p { margin-top: 20px; font-size: 19.05px; line-height: 30px; }

.side { width: 370px; margin-left: 30px; padding-top: 30px; }
.side-head { display: flex; justify-content: space-between; height: 30px; }
h2 { font-size: 18.7px; font-weight: 600; line-height: 32px; letter-spacing: .05px; }
.side-gear { color: #57606a; margin-top: 5px; }
.desc { margin-top: 21px; font-size: 19.05px; line-height: 30px; margin-bottom: 15px; }
.stat { height: 36px; display: flex; align-items: center; color: #57606a; gap: 14px; letter-spacing: -.1px; }
.stat span { margin-top: -1px; }
.about { height: 296px; border-bottom: 1px solid #d8dee4; }
.extra { height: 156px; padding-top: 31px; border-bottom: 1px solid #d8dee4; font-size: 14.05px; line-height: 22.5px; color: #57606a; }
.extra h2 { color: #24292f; letter-spacing: -.1px; }
.extra:last-child { border: 0; }
.extra p { margin-top: 18px; } .extra a { display: block; color: #0969da; }

.scroll { width: 21px; background: #f1f1f1; display: flex; flex-direction: column; align-items: center; }
.thumb { width: 17px; height: 691px; background: #c1c1c1; }
.su, .sd { width: 0; height: 0; border: 5px solid transparent; }
.su { border-bottom-color: #a3a3a3; border-top: 0; margin: 9px 0 7px; }
.sd { border-top-color: #505050; border-bottom: 0; margin-top: auto; margin-bottom: 9px; }

.shelf { height: 71px; flex: none; background: #ffdfe5; border-top: 1px solid #c9b0b5; display: flex; align-items: center; }
.exe { margin-left: 25px; }
.dl { width: 200px; margin-left: 16px; display: flex; flex-direction: column; padding-top: 2px; }
.dl-name { font-size: 15.1px; line-height: 24px; } .dl-st { font-size: 12.2px; line-height: 24px; }
.chev { margin-top: 2px; margin-left: 0; } .dl-div { width: 1px; height: 55px; background: #c9aab0; margin-left: 22px; }
.showall { width: 98px; height: 40px; margin-left: auto; border: 1px solid #dcd6dc; border-radius: 5px; text-align: center; font-size: 14.6px; line-height: 37px; color: #2457b8; }
.shelf-x { margin: 0 17px 0 15px; }

.taskbar { height: 46px; flex: none; background: #202122; display: flex; overflow: hidden; color: #fff; font-size: 14.3px; }
.weather { margin: 15px 0 0 27px; }
.wx { width: 535px; margin: 11px 0 0 11px; line-height: 20px; } .wx2 { color: #bbb; }
.apps { display: flex; margin-left: -12px; gap: 25.1px; padding-top: 15px; }
.apps > svg { width: 30px; height: 30px; overflow: visible; }
.snip { width: 50px; height: 50px; margin: -10px -10px 0; border-radius: 5px 5px 0 0; background: #2f3133; border: 1px solid #3a3c3e; padding: 9px; }
.snip svg { width: 31px; height: 31px; overflow: visible; }
.tray { display: flex; margin-left: auto; width: 448px; }
.t1 { margin-top: 26px; } .t2 { margin: 23px 0 0 21px; } .t3 { margin: 20px 0 0 20px; } .t4 { margin: 21px 0 0 19px; }
.lang { width: 36px; margin: 11px 0 0 21px; text-align: center; line-height: 20px; }
.t5 { margin: 22px 0 0 19px; } .t6 { margin: 22px 0 0 9px; } .t7 { margin: 24px 0 0 11px; }
.clock { width: 84px; margin: 10px 0 0 9px; text-align: right; line-height: 20px; letter-spacing: .1px; }
.t8 { margin: 21px 0 0 17px; }
</style>
